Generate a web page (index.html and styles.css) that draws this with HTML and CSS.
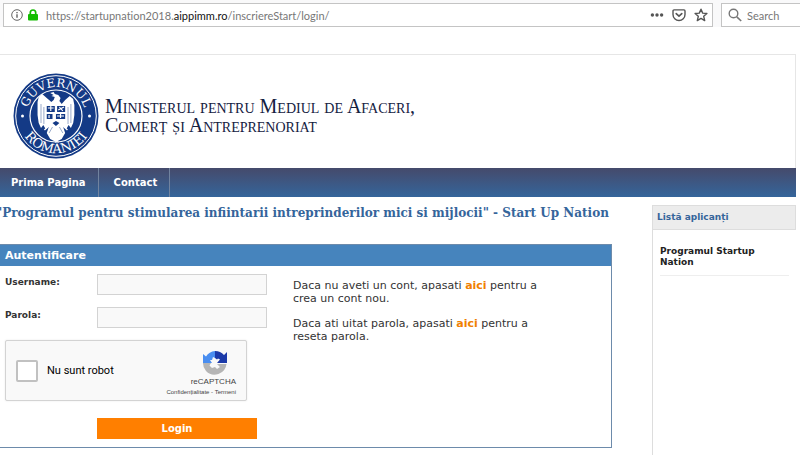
FILE: index.html
```html
<!DOCTYPE html>
<html lang="ro">
<head>
    <meta charset="UTF-8">
    <meta name="viewport" content="width=device-width, initial-scale=1.0">
    <title>Start Up Nation - Autentificare</title>
    <link rel="stylesheet" href="styles.css">
</head>
<body>

<!-- Browser bar -->
<div class="toolbar">
    <div class="url-box">
        <svg class="icon-info" viewBox="0 0 12 12" width="12" height="12">
            <circle cx="6" cy="6" r="5.3" fill="none" stroke="#666" stroke-width="1"/>
            <path d="M6 5.2v3.6M6 2.9v1.4" stroke="#555" stroke-width="1.3"/>
        </svg>
        <svg class="icon-lock" viewBox="0 0 10 12" width="10" height="12">
            <path d="M2.3 6V3.7a2.7 2.7 0 0 1 5.4 0V6" fill="none" stroke="#12bc00" stroke-width="1.7"/>
            <rect x="0" y="5" width="10" height="6.5" rx="1" fill="#12bc00"/>
        </svg>
        <span class="url">https://startupnation2018.<b>aippimm.ro</b>/inscriereStart/login/</span>
        <button type="button" class="tool" aria-label="Page actions">
            <svg viewBox="0 0 14 14" width="14" height="14" fill="#555">
                <circle cx="2.4" cy="7" r="1.7"/><circle cx="7" cy="7" r="1.7"/><circle cx="11.6" cy="7" r="1.7"/>
            </svg>
        </button>
        <button type="button" class="tool" aria-label="Save to Pocket">
            <svg viewBox="0 0 14 14" width="14" height="14" fill="none" stroke="#555" stroke-width="1.4" stroke-linecap="round" stroke-linejoin="round">
                <path d="M2 1.9h10a1 1 0 0 1 1 1v3.6a6 6 0 0 1-12 0V2.9a1 1 0 0 1 1-1z"/>
                <path d="M4.2 5.6L7 8.2l2.8-2.6" stroke-width="1.6"/>
            </svg>
        </button>
        <button type="button" class="tool" aria-label="Bookmark">
            <svg viewBox="0 0 14 14" width="14" height="14" fill="none" stroke="#555" stroke-width="1.4" stroke-linejoin="round">
                <path d="M7 1.2l1.7 3.9 4.2.4-3.2 2.8 1 4.3L7 10.4l-3.7 2.2 1-4.3L1.1 5.5l4.2-.4z"/>
            </svg>
        </button>
    </div>
    <div class="search-box">
        <svg viewBox="0 0 14 14" width="14" height="14" fill="none" stroke="#777">
            <circle cx="5.5" cy="5.5" r="4.3" stroke-width="1.4"/>
            <path d="M8.8 8.8l4.4 4.2" stroke-width="1.6"/>
        </svg>
        <input type="text" class="search-input" placeholder="Search" aria-label="Search">
    </div>
</div>

<div class="page">

    <!-- Header with logo -->
    <header class="header">
        <svg class="seal" viewBox="0 0 86 86" width="86" height="86">
            <defs>
                <path id="arc-top" d="M14 49a29.5 29.5 0 1 1 58 0"/>
                <path id="arc-bottom" d="M5 37a38.3 38.3 0 1 0 76 0"/>
            </defs>
            <circle cx="43" cy="43" r="42.5" fill="#143a86"/>
            <circle cx="43" cy="43" r="40.3" fill="none" stroke="#fff" stroke-width="1"/>
            <circle cx="43" cy="43" r="26" fill="none" stroke="#fff" stroke-width="1.2"/>
            <text class="seal-text"><textPath href="#arc-top" startOffset="50%">GUVERNUL</textPath></text>
            <text class="seal-text seal-text-bottom"><textPath href="#arc-bottom" startOffset="50%">ROMÂNIEI</textPath></text>
            <circle cx="9.5" cy="43" r="1.5" fill="#fff"/>
            <circle cx="76.5" cy="43" r="1.5" fill="#fff"/>
            <!-- eagle -->
            <g transform="translate(-6.5 0) scale(1.15 1)">
                <path fill="#fff" d="M38 20l3-1 1 2 3 1 2 3-1 3 2 3 3-4 4-4 3 3 1 6v10l-1 8-2 5-2-3-2 4-3-3 2 7-3 6-5 3-5-3-3-6 2-7-3 3-2-4-2 3-2-5-1-8V29l1-5 3-3 4 4 4 4 2-2 1-3-3-1 2-1z"/>
                <path fill="#143a86" d="M35 33h7v6h-7zM44 33h7v6h-7zM35 41h5v5h-5zM43 41h8v5h-8zM40 50l3-2 3 2-3 3z"/>
                <path fill="none" stroke="#fff" d="M36 35h5M38.5 33v5M45 37l5-3M46 34l3 4M44 43h6M37 42v3M47 41v4"/>
                <path fill="none" stroke="#143a86" stroke-width=".4" d="M30 31v19M32.5 34v17M53.5 34v17M56 31v19M37 60l3-6M49 60l-3-6"/>
                <path fill="none" stroke="#fff" stroke-width="1.2" d="M33 57l4-4M53 57l-4-4"/>
            </g>
        </svg>
        <div class="ministry">Ministerul pentru Mediul de Afaceri,<br>Comerț și Antreprenoriat</div>
    </header>

    <nav class="menu">
        <a href="#">Prima Pagina</a>
        <a href="#">Contact</a>
    </nav>

    <div class="columns">
        <main class="main">
            <h1 class="title">"Programul pentru stimularea infiintarii intreprinderilor mici si mijlocii" - Start Up Nation</h1>

            <section class="panel">
                <h2 class="panel-title">Autentificare</h2>
                <div class="panel-body">
                    <form class="login-form">
                        <div class="row">
                            <label for="username">Username:</label>
                            <input type="text" id="username" class="field">
                        </div>
                        <div class="row">
                            <label for="password">Parola:</label>
                            <input type="password" id="password" class="field">
                        </div>
                        <div class="captcha">
                            <input type="checkbox" id="robot" class="captcha-check">
                            <label for="robot" class="captcha-label">Nu sunt robot</label>
                            <div class="captcha-brand">
                                <svg viewBox="0 0 24 24" width="24" height="24">
                                    <path fill="#4a8ef0" d="M0 3l3 2.5A12 12 0 0 1 12 0v7l-2-1-1 3-2 0 2 3H0z"/>
                                    <path fill="#1c3aa9" d="M12 0a12 12 0 0 1 9 4l3-3v11H14l3-3.5-2-1-1 1-2-1.5z"/>
                                    <path fill="#b5b5b5" d="M0 12h8l-1.5 2.5L9 17l3-1 2 2 3-2-3-3h9.500A12 12 0 0 1 3 20 12 12 0 0 1 0 12z"/>
                                </svg>
                                <span class="captcha-name">reCAPTCHA</span>
                                <span class="captcha-links"><a href="#">Confidențialitate</a> - <a href="#">Termeni</a></span>
                            </div>
                        </div>
                        <button type="submit" class="login-button">Login</button>
                    </form>
                    <div class="help">
                        <p>Daca nu aveti un cont, apasati <a href="#">aici</a> pentru a crea un cont nou.</p>
                        <p>Daca ati uitat parola, apasati <a href="#">aici</a> pentru a reseta parola.</p>
                    </div>
                </div>
            </section>
        </main>

        <aside class="sidebar">
            <h2 class="sidebar-title">Listă aplicanți</h2>
            <ul class="sidebar-list">
                <li><a href="#">Programul Startup Nation</a></li>
            </ul>
        </aside>
    </div>
</div>

</body>
</html>
```
FILE: styles.css
```css
* {
    box-sizing: border-box;
}

body {
    margin: 0;
    min-height: 100vh;
    display: flex;
    flex-direction: column;
    background-color: #fff;
    font-family: "DejaVu Sans", Verdana, sans-serif;
    font-size: 10px;
    color: #333;
    overflow: hidden;
}

h1, h2, p, ul {
    margin: 0;
    padding: 0;
}

a {
    text-decoration: none;
}

/* Browser bar */
.toolbar {
    display: flex;
    gap: 8px;
    padding: 3px 0 0 3px;
    background-color: #f9f9fa;
    font-family: Lato, sans-serif;
    font-size: 11px;
    font-variant-ligatures: none;
}

.url-box,
.search-box {
    display: flex;
    align-items: center;
    height: 24px;
    background-color: #fff;
    border: 1px solid #c4c4c4;
}

.url-box {
    flex: 1;
    gap: 8px;
    padding: 0 4px 0 7px;
}

.icon-info {
    margin-right: -3px;
}

.url {
    flex: 1;
    color: #777;
    white-space: nowrap;
}

.url b {
    font-weight: normal;
    color: #111;
}

.tool {
    display: flex;
    padding: 0;
    border: none;
    background: none;
}

.search-box {
    width: 79px;
    gap: 5px;
    padding-left: 6px;
    border-right: none;
}

.search-input {
    flex: 1;
    min-width: 0;
    padding: 0;
    border: none;
    outline: none;
    font: inherit;
}

.search-input::placeholder {
    color: #777;
}

/* Page runs slightly past the left edge of the window */
.page {
    flex: 1;
    display: flex;
    flex-direction: column;
    margin: 27px 4px 0 -4px;
}

.header {
    display: flex;
    align-items: center;
    gap: 6px;
    padding: 18px 16px 9px;
    border: 1px solid #e6e6e6;
    border-bottom: none;
}

.seal {
    flex: none;
}

.seal-text {
    font-family: "DejaVu Serif", serif;
    font-size: 12px;
    fill: #fff;
    text-anchor: middle;
}

.seal-text-bottom {
    font-size: 13px;
}

.ministry {
    font-family: "Liberation Serif", serif;
    font-size: 20px;
    line-height: 19px;
    font-variant: small-caps;
    color: #14213f;
}

.menu {
    display: flex;
    background: linear-gradient(#454a6b, #35659b);
}

.menu a {
    padding: 0 12px 0 15px;
    line-height: 29px;
    font-weight: bold;
    color: #fff;
    border-right: 1px solid #71839f;
}

.columns {
    flex: 1;
    display: grid;
    grid-template-columns: 1fr 144px;
    gap: 40px;
    padding-top: 8px;
}

.title {
    font-family: "DejaVu Serif", Georgia, serif;
    font-size: 12px;
    line-height: 16px;
    color: #35659b;
    white-space: nowrap;
    margin-bottom: 23px;
}

.panel {
    border: 1px solid #6d8bab;
}

.panel-title {
    padding: 0 8px;
    font-size: 11px;
    line-height: 21px;
    color: #fff;
    background-color: #4684bd;
}

.panel-body {
    display: flex;
    gap: 26px;
    padding: 8px;
}

.login-form {
    width: 262px;
}

.row {
    display: flex;
    margin-bottom: 12px;
}

.row label {
    width: 92px;
    padding-top: 3px;
    font-size: 9px;
    font-weight: bold;
}

.field {
    flex: 1;
    min-width: 0;
    height: 21px;
    border: 1px solid #d3d3d3;
    background-color: #f9f9f9;
}

/* reCAPTCHA box */
.captcha {
    display: flex;
    align-items: center;
    gap: 9px;
    width: 242px;
    height: 61px;
    padding: 0 10px;
    border: 1px solid #d3d3d3;
    border-radius: 2px;
    background-color: #f9f9f9;
    box-shadow: 0 0 2px rgba(0, 0, 0, 0.1);
}

.captcha-check {
    appearance: none;
    width: 22px;
    height: 22px;
    margin: 0;
    border: 2px solid #c1c1c1;
    border-radius: 2px;
    background-color: #fff;
}

.captcha-label {
    flex: 1;
    font-family: Roboto, sans-serif;
    font-size: 11px;
    color: #000;
}

.captcha-brand {
    display: flex;
    flex-direction: column;
    align-items: flex-end;
    padding-top: 4px;
    font-family: "Liberation Sans", sans-serif;
    color: #444;
}

.captcha-brand svg {
    margin-right: 9px;
}

.captcha-name {
    font-size: 8px;
    line-height: 14px;
}

.captcha-links {
    font-size: 6px;
    line-height: 6px;
}

.captcha-links a {
    color: #444;
}

.login-button {
    display: block;
    width: 160px;
    height: 21px;
    margin: 17px 0 0 92px;
    border: none;
    background-color: #ff7f00;
    font-family: inherit;
    font-size: 10px;
    font-weight: bold;
    color: #fff;
}

.help {
    width: 250px;
    padding-top: 5px;
    font-size: 11px;
    line-height: 13px;
}

.help p {
    margin-bottom: 12px;
}

.help a {
    font-weight: bold;
    color: #f08000;
}

/* Sidebar */
.sidebar {
    border-left: 1px solid #ddd;
}

.sidebar-title {
    padding: 0 4px;
    font-size: 9px;
    line-height: 23px;
    color: #35659b;
    background-color: #ececec;
    border: 1px solid #ddd;
    border-left: none;
}

.sidebar-list {
    list-style: none;
    padding: 16px 7px;
}

.sidebar-list li {
    padding-bottom: 7px;
    border-bottom: 1px solid #eee;
    font-size: 9px;
    line-height: 11px;
}

.sidebar-list a {
    font-weight: bold;
    color: #222;
}
```
